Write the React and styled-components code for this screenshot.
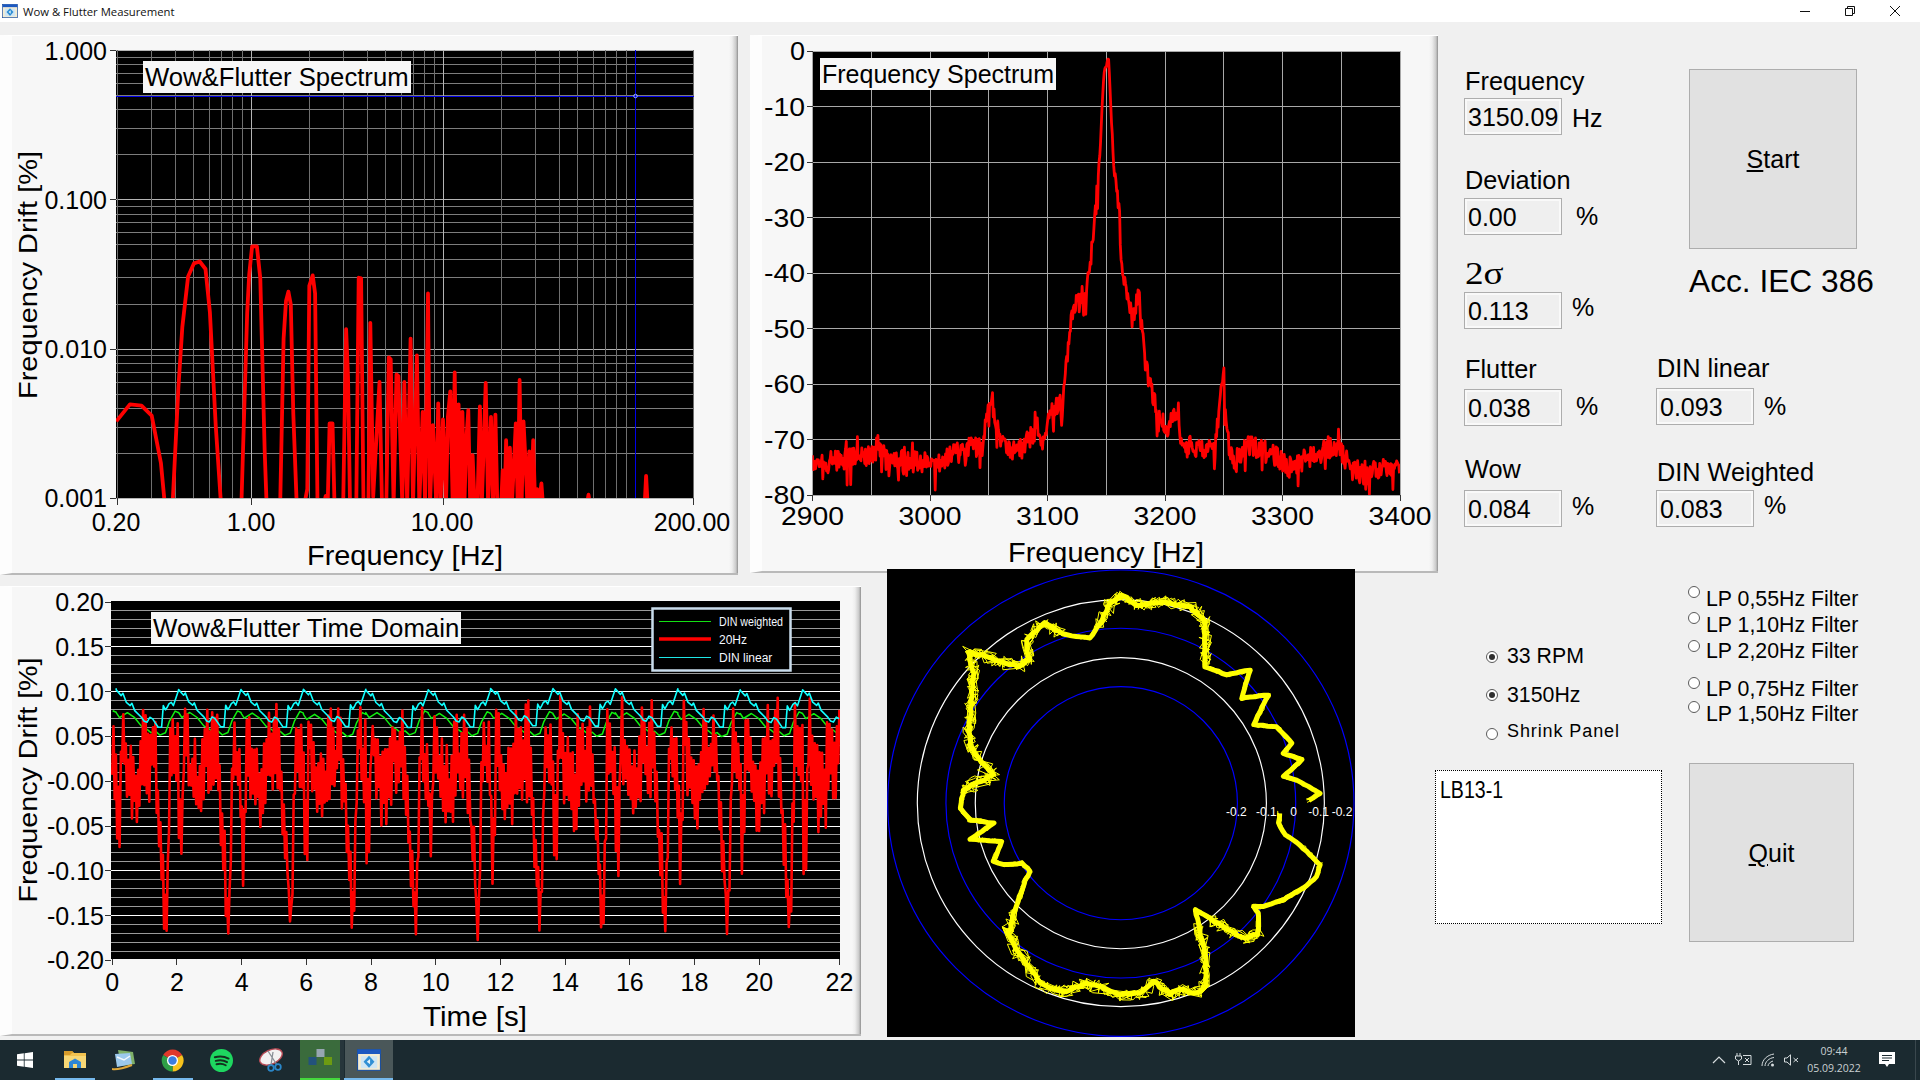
import React from "react";
import styled, { createGlobalStyle } from "styled-components";

const GlobalStyle = createGlobalStyle`
  html, body {
    margin: 0;
    padding: 0;
    background: #f0f0f0;
    overflow: hidden;
  }
  * { box-sizing: border-box; }
`;

/* ---------- helpers for the fake measurement data ---------- */

const seeded = (seed) => {
  let s = seed;
  return () => {
    s = (s * 16807) % 2147483647;
    return (s - 1) / 2147483646;
  };
};

const lookup = (table, t) => {
  for (let i = 1; i < table.length; i++) {
    if (t <= table[i][0]) {
      const [x0, ...a] = table[i - 1];
      const [x1, ...b] = table[i];
      const f = (t - x0) / (x1 - x0 || 1);
      return a.map((v, k) => v + (b[k] - v) * f);
    }
  }
  return table[table.length - 1].slice(1);
};

const toPoints = (pts) => pts.map(([x, y]) => `${x.toFixed(1)},${y.toFixed(1)}`).join(" ");

/* ---------- wow & flutter spectrum ---------- */

const specX = (f) => 251.6 + Math.log10(f) * 192;
const specY = (v) => 15.5 + -Math.log10(v) * 149.3;
const specMap = ([x, y]) => [x / 2.063, y / 2.658 - 35];

const specRaw = [
  [240, 1120], [268, 1075], [292, 1078], [313, 1105], [332, 1230], [340, 1340],
  [356, 1340], [368, 1030], [376, 870], [388, 735], [400, 700], [412, 695], [424, 715], [433, 830], [445, 1130], [456, 1340],
  [498, 1340], [510, 830], [514, 730], [520, 655], [530, 655], [537, 740], [546, 1200], [550, 1340],
  [578, 1340], [585, 900], [590, 800], [595, 775], [600, 810], [605, 1100], [612, 1340],
  [628, 1340], [634, 1300], [638, 760], [645, 732], [650, 780], [655, 1340],
  [668, 1340], [672, 1318], [676, 1340], [680, 1125], [686, 1125], [690, 1340],
  [708, 1340], [714, 875], [718, 1000], [722, 1340],
  [735, 1340], [740, 738], [745, 740], [750, 1340],
  [760, 1340], [764, 858], [770, 1320], [783, 1015], [788, 1340],
  [797, 1340], [802, 950], [806, 955], [812, 1340], [818, 995], [822, 1000], [830, 1340], [834, 1015], [840, 1340],
  [847, 900], [852, 1340], [860, 945], [865, 1340], [872, 1095], [877, 1340], [883, 780], [887, 1340], [893, 1130],
  [900, 1340], [904, 1072], [909, 1340], [914, 1115], [920, 1340], [924, 1108], [929, 1040], [934, 1340], [938, 990], [942, 1340],
  [946, 1075], [950, 1340], [954, 1095], [958, 1340], [962, 1170], [966, 1090], [970, 1340], [975, 1210], [979, 1340],
  [985, 1340], [990, 1080], [994, 1340], [998, 1180], [1002, 1018], [1007, 1340], [1013, 1108], [1017, 1340], [1022, 1102], [1026, 1340],
  [1034, 1340], [1037, 1250], [1041, 1340], [1044, 1170], [1048, 1340], [1052, 1190], [1056, 1340], [1060, 1240], [1064, 1125], [1068, 1340],
  [1072, 1010], [1076, 1340], [1080, 1120], [1084, 1220], [1088, 1340], [1092, 1200], [1096, 1340], [1100, 1170], [1104, 1340], [1108, 1300],
  [1112, 1340], [1117, 1285], [1120, 1340],
  [1211, 1340], [1214, 1315], [1217, 1340],
  [1330, 1340], [1333, 1265], [1336, 1340],
];

const specCurve = toPoints(specRaw.map(specMap));

/* ---------- carrier spectrum ---------- */

const fftMap = ([x, y]) => [x / 2.178 - 10, y / 2.75 - 15];

const fftEnvelope = [
  [158, 1225], [290, 1195], [300, 1170], [320, 1210], [400, 1215], [415, 1225], [500, 1175], [530, 1180],
  [540, 1050], [548, 1025], [555, 1100], [570, 1170], [600, 1190], [630, 1150], [650, 1120], [660, 1160],
  [680, 1075], [700, 1050], [710, 960], [720, 820], [735, 770], [755, 745], [765, 640], [775, 520], [785, 340],
  [792, 150], [798, 130], [803, 100], [808, 250], [815, 420], [825, 520], [832, 700], [845, 750], [855, 830],
  [870, 735], [878, 870], [890, 990], [905, 1060], [915, 1090], [930, 1140], [950, 1075], [965, 1170],
  [1000, 1180], [1035, 1180], [1045, 1045], [1053, 995], [1060, 1150], [1080, 1220], [1105, 1165], [1150, 1190],
  [1200, 1230], [1240, 1200], [1295, 1175], [1330, 1220], [1360, 1255], [1390, 1230], [1437, 1230],
];

const fftCurve = (() => {
  const rnd = seeded(4711);
  const pts = [];
  for (let x = 158; x <= 1437; x += 1.6) {
    const [env] = lookup(fftEnvelope, x);
    const peak = x > 780 && x < 815;
    const amp = peak ? 8 : x > 700 && x < 900 ? 26 : 30;
    let y = env + (rnd() - 0.5) * amp * 2;
    if (!peak && rnd() < 0.06) y += 45;
    if (!peak && rnd() < 0.04) y -= 34;
    pts.push([x, y]);
  }
  return toPoints(pts.map(fftMap));
})();

/* ---------- time domain ---------- */

const timeMap = ([x, y]) => [x / 1.782, y / 3 - 16];
const PERIOD = 111.2;

// upper and lower edge of the red band over one platter turn
const redBand = [
  [0, 500, 660], [6, 410, 720], [9, 600, 950], [14, 620, 950], [17, 365, 600], [21, 365, 640], [25, 500, 700],
  [35, 500, 790], [45, 540, 800], [52, 390, 760], [57, 390, 660], [62, 480, 700], [69, 370, 700], [74, 370, 700],
  [80, 540, 770], [85, 740, 900], [90, 760, 1000], [93, 960, 1112], [97, 960, 1112], [100, 700, 960],
  [104, 385, 640], [108, 385, 620], [111.2, 500, 660],
];

const cyanWave = [
  [0, 358], [9, 375], [12, 368], [18, 395], [25, 405], [28, 398], [33, 420], [45, 440], [50, 452], [55, 455], [60, 440],
  [65, 445], [75, 470], [81, 470], [84, 405], [88, 418], [91, 410], [94, 400], [98, 395], [102, 405], [111.2, 358],
];

const greenWave = [
  [0, 430], [6, 445], [20, 430], [33, 445], [45, 470], [55, 480], [62, 490], [70, 485], [78, 497], [88, 490], [92, 470],
  [95, 455], [105, 425], [111.2, 430],
];

const timeRed = (() => {
  const rnd = seeded(90210);
  const pts = [];
  let i = 0;
  for (let x = 200; x <= 1496; x += 2.2) {
    const [up, lo] = lookup(redBand, (x - 200) % PERIOD);
    const f = rnd() * 0.4;
    pts.push([x, i % 2 ? up + (lo - up) * f : lo - (lo - up) * f]);
    i += 1;
  }
  return toPoints(pts.map(timeMap));
})();

const periodic = (wave, seed) => {
  const rnd = seeded(seed);
  const pts = [];
  for (let k = -1; k < 12; k++) {
    const wobble = (rnd() - 0.5) * 6;
    wave.forEach(([t, y]) => {
      const x = 207 + k * PERIOD + t;
      if (x >= 200 && x <= 1496) pts.push([x, y + wobble]);
    });
  }
  return toPoints(pts.map(timeMap));
};

const timeCyan = periodic(cyanWave, 333);
const timeGreen = periodic(greenWave, 777);

/* ---------- polar plot, traced in 3x coordinates ---------- */

const polarRaw = [
  [1200, 760], [1195, 790], [1215, 825], [1240, 840], [1280, 875], [1320, 915], [1310, 950], [1270, 985], [1210, 1020],
  [1150, 1040], [1120, 1040], [1135, 1060], [1135, 1125], [1090, 1135], [1040, 1110], [990, 1075], [945, 1050], [960, 1110],
  [975, 1190], [975, 1280], [950, 1300], [900, 1290], [870, 1305], [820, 1265], [780, 1300], [720, 1305], [680, 1290],
  [620, 1270], [560, 1295], [520, 1290], [480, 1270], [440, 1210], [400, 1160], [385, 1120], [405, 1050], [435, 960],
  [450, 935], [425, 910], [370, 915], [340, 905], [365, 845], [270, 838], [340, 790], [270, 780], [240, 745], [250, 690],
  [290, 670], [340, 645], [300, 605], [270, 560], [265, 500], [275, 420], [280, 340], [265, 275], [330, 295], [415, 320],
  [445, 300], [440, 240], [490, 190], [560, 225], [630, 235], [660, 190], [690, 130], [725, 105], [770, 135], [850, 125],
  [930, 140], [975, 185], [975, 320], [1040, 345], [1110, 330], [1085, 415], [1165, 405], [1120, 495], [1190, 500],
  [1235, 550], [1210, 580], [1265, 600], [1210, 650], [1250, 660], [1320, 700], [1275, 730],
];

const polarPass = (seed, amount) => {
  const rnd = seeded(seed);
  const pts = [];
  polarRaw.forEach((p, i) => {
    const next = polarRaw[i + 1];
    if (!next) return;
    const n = Math.max(1, Math.round(Math.hypot(next[0] - p[0], next[1] - p[1]) / 14));
    for (let k = 0; k < n; k++) {
      const f = k / n;
      const noisy = p[1] > 1100 || (p[0] < 500 && p[1] < 700) || p[1] < 200;
      const a = noisy ? amount * 1.6 : amount * 0.6;
      pts.push([
        p[0] + (next[0] - p[0]) * f + (rnd() - 0.5) * a,
        p[1] + (next[1] - p[1]) * f + (rnd() - 0.5) * a,
      ]);
    }
  });
  return toPoints(pts);
};

const polarPasses = [11, 23, 37, 41, 59, 67].map((seed) => polarPass(seed, 24));
const polarCore = polarPass(5, 4);

/* ---------- page chrome ---------- */

const Page = styled.div`
  width: 1920px;
  height: 1080px;
  display: flex;
  flex-direction: column;
  background: #f0f0f0;
  font-family: "Liberation Sans", Arial, sans-serif;
  color: #000;
  overflow: hidden;
`;

const TitleBar = styled.div`
  height: 22px;
  flex: none;
  background: #fff;
  display: flex;
  align-items: center;
  padding: 0 3px 0 2px;
`;

const TitleText = styled.span`
  font-family: "Open Sans", sans-serif;
  font-size: 11.3px;
  margin-left: 5px;
  color: #111;
  white-space: nowrap;
`;

const WindowButtons = styled.div`
  margin-left: auto;
  display: flex;
`;

const WindowButton = styled.div`
  width: 45px;
  height: 22px;
  display: flex;
  align-items: center;
  justify-content: center;
`;

const TopRow = styled.div`
  height: 564px;
  flex: none;
  padding-top: 13px;
  display: flex;
  align-items: flex-start;
`;

const BottomRow = styled.div`
  height: 454px;
  flex: none;
  display: flex;
  align-items: flex-start;
`;

const Panel = styled.div`
  position: relative;
  flex: none;
  width: ${(p) => p.$w}px;
  height: ${(p) => p.$h}px;
  margin-left: ${(p) => p.$left || 0}px;
  background: linear-gradient(to left, #8f8f8f 0, #c9c9c9 2px, #eeeeee 6px, #f7f7f7 9px);
  border-top: 1px solid #fff;
  border-bottom: 2px solid #b9b9b9;
  border-left: 12px solid #fdfdfd;
`;

const ChartSvg = styled.svg`
  position: absolute;
  left: -12px;
  top: -1px;
  display: block;
`;

const PlotTitle = styled.div`
  position: absolute;
  left: ${(p) => p.$x - 12}px;
  top: ${(p) => p.$y - 1}px;
  height: 32px;
  line-height: 33px;
  padding: 0 2px;
  background: #f7f7f7;
  font-size: ${(p) => p.$size || 25}px;
  white-space: nowrap;
`;

const AxisText = styled.text`
  font-family: "Liberation Sans", Arial, sans-serif;
  font-size: ${(p) => p.$size || 25}px;
  fill: #000;
`;

const LegendLabel = styled.text`
  font-family: "Liberation Sans", Arial, sans-serif;
  font-size: 12px;
  fill: #f4f8ff;
`;

const PolarBox = styled.div`
  position: relative;
  flex: none;
  width: 468px;
  height: 468px;
  margin: -17px 0 0 26px;
  background: #000;
`;

const PolarSvg = styled.svg`
  display: block;
`;

const PolarLabel = styled.text`
  font-family: "Liberation Sans", Arial, sans-serif;
  font-size: 36px;
  fill: #fff;
`;

/* ---------- readouts on the right ---------- */

const Readouts = styled.div`
  flex: 1;
  display: flex;
  padding-left: 26px;
`;

const ReadoutColumn = styled.div`
  width: ${(p) => p.$w}px;
  flex: none;
  display: flex;
  flex-direction: column;
`;

const Readout = styled.div`
  height: ${(p) => p.$h}px;
  flex: none;
  display: flex;
  flex-direction: column;
  justify-content: flex-end;
`;

const ReadoutLabel = styled.div`
  font-size: 25.3px;
  line-height: 24px;
  height: 24px;
  margin: 0 0 ${(p) => p.$gap + 1}px 1px;
  white-space: nowrap;
`;

const SigmaLabel = styled(ReadoutLabel)`
  font-family: "Liberation Serif", serif;
  font-size: 31px;
  transform: scaleX(1.2);
  transform-origin: left center;
`;

const ValueRow = styled.div`
  display: flex;
  align-items: center;
`;

const ValueBox = styled.div`
  width: 98px;
  height: 37px;
  border: 1px solid #adadad;
  box-shadow: inset 0 0 0 2px #f9f9f9;
  background: #efefef;
  font-size: 25px;
  line-height: 37px;
  padding-left: 3px;
`;

const Unit = styled.span`
  font-size: 25px;
  margin-left: ${(p) => p.$gap}px;
  transform: translateY(${(p) => p.$dy || 0}px);
`;

const BigButton = styled.div`
  width: ${(p) => p.$w}px;
  height: ${(p) => p.$h}px;
  margin-top: ${(p) => p.$top}px;
  margin-left: ${(p) => p.$left}px;
  padding-top: ${(p) => p.$pad || 0}px;
  flex: none;
  background: #e1e1e1;
  border: 1px solid #adadad;
  display: flex;
  align-items: center;
  justify-content: center;
  font-size: 25px;
`;

const StandardNote = styled.div`
  margin: 14px 0 0 33px;
  font-size: 31.7px;
  line-height: 36px;
  white-space: nowrap;
`;

/* ---------- radios, memo and quit ---------- */

const Controls = styled.div`
  flex: 1;
  display: flex;
  padding-left: 80px;
`;

const ControlLeft = styled.div`
  width: 253px;
  flex: none;
  padding-top: 58px;
  display: flex;
  flex-direction: column;
`;

const ControlRight = styled.div`
  flex: none;
  display: flex;
  flex-direction: column;
`;

const RadioRow = styled.div`
  height: 24px;
  flex: none;
  display: flex;
  align-items: flex-start;
  margin-top: ${(p) => p.$top || 0}px;
  margin-left: ${(p) => p.$left || 0}px;
`;

const RadioDot = styled.span`
  width: 12px;
  height: 12px;
  flex: none;
  margin-top: ${(p) => p.$dy}px;
  border-radius: 50%;
  border: 1px solid #5a5a5a;
  background: #fff;
  display: flex;
  align-items: center;
  justify-content: center;

  &::after {
    content: "";
    display: ${(p) => (p.$on ? "block" : "none")};
    width: 6px;
    height: 6px;
    border-radius: 50%;
    background: #2f2f2f;
  }
`;

const RadioText = styled.span`
  font-size: ${(p) => p.$size || 21.3}px;
  line-height: 24px;
  margin-left: ${(p) => p.$gap || 6}px;
  letter-spacing: ${(p) => p.$track || 0}px;
  white-space: nowrap;
`;

const Memo = styled.div`
  width: 227px;
  height: 154px;
  flex: none;
  margin-top: 27px;
  background: #fff;
  border: 1px dotted #000;
  padding: 4px 4px;
`;

const MemoText = styled.span`
  display: inline-block;
  font-size: 23px;
  line-height: 30px;
  transform: scaleX(0.85);
  transform-origin: left center;
`;

/* ---------- taskbar ---------- */

const Taskbar = styled.div`
  flex: none;
  height: 40px;
  background: #1b2a30;
  display: flex;
  margin-top: auto;
`;

const TaskItem = styled.div`
  position: relative;
  width: ${(p) => p.$w || 49}px;
  height: 40px;
  flex: none;
  display: flex;
  align-items: center;
  justify-content: center;
`;

const TaskUnderline = styled.span`
  position: absolute;
  bottom: 0;
  left: ${(p) => p.$inset ?? 5}px;
  right: ${(p) => (p.$inset !== undefined ? p.$inset : 4)}px;
  height: 2px;
  background: ${(p) => p.$color || "#76b9ed"};
`;

const TaskTile = styled.span`
  position: absolute;
  top: 0;
  bottom: 0;
  left: ${(p) => p.$left}px;
  right: ${(p) => p.$right}px;
  background: ${(p) => p.$color};
`;

const TaskIcon = styled.svg`
  position: relative;
  display: block;
`;

const Tray = styled.div`
  margin-left: auto;
  display: flex;
  align-items: center;
  height: 40px;
`;

const TrayIcon = styled.div`
  width: ${(p) => p.$w}px;
  flex: none;
  display: flex;
  justify-content: center;
`;

const Clock = styled.div`
  width: 66px;
  flex: none;
  text-align: center;
  font-family: "Open Sans", sans-serif;
  font-size: 10.5px;
  line-height: 17px;
  color: #c9d0d2;
`;

const DesktopEdge = styled.div`
  width: 1px;
  height: 40px;
  margin: 0 4px 0 8px;
  background: #3a474d;
`;

/* ---------- charts ---------- */

const SpectrumChart = () => {
  const decades = [0.2, 0.3, 0.4, 0.5, 0.6, 0.7, 0.8, 0.9, 1, 2, 3, 4, 5, 6, 7, 8, 9, 10, 20, 30, 40, 50, 60, 70, 80, 90, 100, 200];
  const levels = [];
  [0.001, 0.01, 0.1].forEach((d) => {
    for (let m = 1; m < 10; m++) levels.push(d * m);
  });
  levels.push(1);
  const major = (v) => [1, 10, 100].some((m) => Math.abs(v - m) < 1e-6);
  return (
    <ChartSvg width="738" height="540" viewBox="0 0 738 540">
      <defs>
        <clipPath id="specClip"><rect x="116" y="15" width="578" height="448" /></clipPath>
      </defs>
      <rect x="116" y="15" width="578" height="448" fill="#000" />
      <g shapeRendering="crispEdges">
        {levels.map((v) => (
          <line key={v} x1="116" x2="694" y1={specY(v)} y2={specY(v)} stroke={[0.001, 0.01, 0.1, 1].some((m) => Math.abs(v - m) < 1e-9) ? "#b4b4b4" : "#7d7d7d"} />
        ))}
        {decades.map((f) => (
          <line key={f} x1={specX(f)} x2={specX(f)} y1="15" y2="463" stroke={major(f) ? "#b4b4b4" : "#6f6f6f"} />
        ))}
        <line x1="116" x2="694" y1="61" y2="61" stroke="#0000e6" />
        <line x1="635" x2="635" y1="15" y2="463" stroke="#0000e6" />
        {[0.001, 0.01, 0.1, 1].map((v) => (
          <line key={v} x1="110" x2="116" y1={specY(v)} y2={specY(v)} stroke="#333" />
        ))}
        {[0.2, 1, 10, 200].map((f) => (
          <line key={f} x1={specX(f)} x2={specX(f)} y1="463" y2="470" stroke="#333" />
        ))}
      </g>
      <circle cx="635.5" cy="61" r="1.8" fill="none" stroke="#8fa6ff" />
      <polyline points={specCurve} fill="none" stroke="#f00" strokeWidth="3.8" strokeLinejoin="round" clipPath="url(#specClip)" />
      {[["1.000", 1], ["0.100", 0.1], ["0.010", 0.01], ["0.001", 0.001]].map(([t, v]) => (
        <AxisText key={t} x="107" y={specY(v) + 9} textAnchor="end">{t}</AxisText>
      ))}
      <AxisText x="116" y="496" textAnchor="middle">0.20</AxisText>
      <AxisText x="251" y="496" textAnchor="middle">1.00</AxisText>
      <AxisText x="442" y="496" textAnchor="middle">10.00</AxisText>
      <AxisText x="692" y="496" textAnchor="middle">200.00</AxisText>
      <AxisText x="405" y="530" $size={28} textAnchor="middle" textLength="196" lengthAdjust="spacingAndGlyphs">Frequency [Hz]</AxisText>
      <AxisText transform="translate(37 240) rotate(-90)" textAnchor="middle" textLength="248" lengthAdjust="spacingAndGlyphs">Frequency Drift [%]</AxisText>
    </ChartSvg>
  );
};

const FftChart = () => {
  const left = 62.5;
  const right = 650;
  const top = 16;
  const bottom = 460;
  const hz = Array.from({ length: 11 }, (_, i) => left + (i * (right - left)) / 10);
  const db = Array.from({ length: 9 }, (_, i) => top + i * 55.5);
  return (
    <ChartSvg width="688" height="538" viewBox="0 0 688 538">
      <defs>
        <clipPath id="fftClip"><rect x={left} y={top} width={right - left} height={bottom - top} /></clipPath>
      </defs>
      <rect x={left} y={top} width={right - left} height={bottom - top} fill="#000" />
      <g shapeRendering="crispEdges">
        {db.map((y) => (
          <line key={y} x1={left} x2={right} y1={y} y2={y} stroke="#a8a8a8" />
        ))}
        {hz.map((x) => (
          <line key={x} x1={x} x2={x} y1={top} y2={bottom} stroke="#a8a8a8" />
        ))}
        {db.map((y) => (
          <line key={y} x1={left - 6} x2={left} y1={y} y2={y} stroke="#333" />
        ))}
        {hz.filter((_, i) => i % 2 === 0).map((x) => (
          <line key={x} x1={x} x2={x} y1={bottom} y2={bottom + 6} stroke="#333" />
        ))}
      </g>
      <polyline points={fftCurve} fill="none" stroke="#f00" strokeWidth="2.8" strokeLinejoin="round" clipPath="url(#fftClip)" />
      {db.map((y, i) => (
        <AxisText key={y} x="55" y={y + 9} textAnchor="end" textLength={i === 0 ? 15 : 41} lengthAdjust="spacingAndGlyphs">
          {i === 0 ? "0" : `-${i * 10}`}
        </AxisText>
      ))}
      {hz.filter((_, i) => i % 2 === 0).map((x, i) => (
        <AxisText key={x} x={x} y="490" textAnchor="middle" textLength="63" lengthAdjust="spacingAndGlyphs">{2900 + i * 100}</AxisText>
      ))}
      <AxisText x="356" y="527" $size={28} textAnchor="middle" textLength="196" lengthAdjust="spacingAndGlyphs">Frequency [Hz]</AxisText>
    </ChartSvg>
  );
};

const TimeChart = () => {
  const left = 111;
  const right = 840;
  const top = 15;
  const bottom = 373;
  const step = 44.8;
  const zero = 195.2;
  const majors = [-4, -3, -2, -1, 0, 1, 2, 3, 4].map((i) => zero + i * step);
  const minors = [];
  for (let i = -4; i < 4; i++) {
    for (let k = 1; k < 5; k++) minors.push(zero + (i + k / 5) * step);
  }
  const labels = ["0.20", "0.15", "0.10", "0.05", "-0.00", "-0.05", "-0.10", "-0.15", "-0.20"];
  const seconds = Array.from({ length: 12 }, (_, i) => i * 2);
  // the axis runs a little past 22 s, the last tick label is pushed to the end
  const timeX = (s) => (s === 22 ? 839.5 : 112.2 + s * 32.35);
  return (
    <ChartSvg width="861" height="450" viewBox="0 0 861 450">
      <defs>
        <clipPath id="timeClip"><rect x={left} y={top} width={right - left} height={bottom - top} /></clipPath>
      </defs>
      <rect x={left} y={top} width={right - left} height={bottom - top} fill="#000" />
      <g shapeRendering="crispEdges">
        {minors.map((y) => (
          <line key={y} x1={left} x2={right} y1={y} y2={y} stroke="#9a9a9a" />
        ))}
        {majors.slice(1, -1).map((y) => (
          <line key={y} x1={left} x2={right} y1={y} y2={y} stroke="#fff" />
        ))}
        {majors.map((y) => (
          <line key={y} x1={left - 6} x2={left} y1={y} y2={y} stroke="#333" />
        ))}
        {seconds.map((s) => (
          <line key={s} x1={timeX(s)} x2={timeX(s)} y1={bottom} y2={bottom + 6} stroke="#333" />
        ))}
      </g>
      <g clipPath="url(#timeClip)" fill="none" strokeLinejoin="round">
        <polyline points={timeGreen} stroke="#10f010" strokeWidth="1.5" />
        <polyline points={timeRed} stroke="#f00" strokeWidth="2.6" />
        <polyline points={timeCyan} stroke="#10ffff" strokeWidth="1.6" />
      </g>
      <rect x="652.5" y="22.5" width="138" height="62" fill="#000" stroke="#c9dcec" strokeWidth="2.5" />
      <line x1="659" x2="711" y1="35.5" y2="35.5" stroke="#13e013" />
      <line x1="659" x2="711" y1="53" y2="53" stroke="#f00" strokeWidth="3.5" />
      <line x1="659" x2="711" y1="71.5" y2="71.5" stroke="#1fe8e8" />
      <LegendLabel x="719" y="40" textLength="64" lengthAdjust="spacingAndGlyphs">DIN weighted</LegendLabel>
      <LegendLabel x="719" y="58">20Hz</LegendLabel>
      <LegendLabel x="719" y="76">DIN linear</LegendLabel>
      {labels.map((t, i) => (
        <AxisText key={t} x="104" y={majors[i] + 9} textAnchor="end">{t}</AxisText>
      ))}
      {seconds.map((s) => (
        <AxisText key={s} x={timeX(s)} y="405" textAnchor="middle">{s}</AxisText>
      ))}
      <AxisText x="475" y="440" $size={28} textAnchor="middle" textLength="104" lengthAdjust="spacingAndGlyphs">Time [s]</AxisText>
      <AxisText transform="translate(37 194) rotate(-90)" textAnchor="middle" textLength="245" lengthAdjust="spacingAndGlyphs">Frequency Drift [%]</AxisText>
    </ChartSvg>
  );
};

const PolarChart = () => (
  <PolarSvg width="468" height="468" viewBox="20 27 1405 1405">
    {[
      [700, "#0000ff"],
      [611, "#fff"],
      [525, "#0000ff"],
      [437, "#fff"],
      [350, "#0000ff"],
    ].map(([r, c]) => (
      <circle key={r} cx="722" cy="730" r={r} fill="none" stroke={c} strokeWidth="3.5" />
    ))}
    {polarPasses.map((p, i) => (
      <polyline key={i} points={p} fill="none" stroke="#ff0" strokeWidth="3" />
    ))}
    <polyline points={polarCore} fill="none" stroke="#ff0" strokeWidth="15" strokeLinejoin="round" />
    <PolarLabel x="1038" y="770">-0.2</PolarLabel>
    <PolarLabel x="1128" y="770">-0.1</PolarLabel>
    <PolarLabel x="1231" y="770">0</PolarLabel>
    <PolarLabel x="1285" y="770">-0.1</PolarLabel>
    <PolarLabel x="1355" y="770">-0.2</PolarLabel>
  </PolarSvg>
);

/* ---------- icons ---------- */

const AppIcon = ({ w = 16, h = 14 }) => (
  <TaskIcon width={w} height={h} viewBox="0 0 22 20">
    <rect x="0.5" y="0.5" width="21" height="19" fill="#f4ecd2" stroke="#1c4f9c" />
    <rect x="0.5" y="0.5" width="21" height="4" fill="#1c58c0" />
    <rect x="3.5" y="6.5" width="15" height="11" fill="#cfe6f4" />
    <path d="M11 6 L16 11.5 L11 17 L6 11.5 Z" fill="#2f8fd4" />
    <path d="M9 11.5 L12 9 L12 14 Z" fill="#e4f3fb" />
  </TaskIcon>
);

const WinLogo = () => (
  <TaskIcon width="16" height="16" viewBox="0 0 16 16">
    <path d="M0 2.2 L6.8 1.3 V7.5 H0 Z M7.6 1.2 L16 0 V7.5 H7.6 Z M0 8.4 H6.8 V14.7 L0 13.8 Z M7.6 8.4 H16 V16 L7.6 14.8 Z" fill="#fff" />
  </TaskIcon>
);

const FolderIcon = () => (
  <TaskIcon width="22" height="20" viewBox="0 0 22 20">
    <path d="M0 1 H8 L10 3 H22 V18 H0 Z" fill="#f3c24f" />
    <path d="M0 1 H8 L10 3 H8 L6 5 H0 Z" fill="#d79b2a" />
    <path d="M0 6 H22 V18 H0 Z" fill="#f8d775" />
    <path d="M5 18 V12 L11 8.5 L17 12 V18 H13 V14 H9 V18 Z" fill="#2f86d6" />
  </TaskIcon>
);

const MailIcon = () => (
  <TaskIcon width="24" height="22" viewBox="0 0 24 22">
    <path d="M6 1 L21 3 L23 15 L9 17 Z" fill="#7fb069" />
    <path d="M3 5 L18 4 L20 15 L5 18 Z" fill="#9cc9ec" />
    <path d="M5 8 L12 11 L18 7" fill="none" stroke="#f4f8fc" strokeWidth="1.5" />
    <path d="M0 20 C5 21 12 19 20 16" fill="none" stroke="#e0a83a" strokeWidth="2" />
  </TaskIcon>
);

const ChromeIcon = () => (
  <TaskIcon width="23" height="23" viewBox="0 0 48 48">
    <path d="M24 24 L4.5 12.5 A23 23 0 0 1 44 12.5 Z" fill="#e0392b" />
    <path d="M24 24 L44 12.5 A23 23 0 0 1 24 47 Z" fill="#f6c21c" />
    <path d="M24 24 L24 47 A23 23 0 0 1 4.5 12.5 Z" fill="#2e9e46" />
    <circle cx="24" cy="24" r="11.5" fill="#fff" />
    <circle cx="24" cy="24" r="8.8" fill="#3b7de0" />
  </TaskIcon>
);

const SpotifyIcon = () => (
  <TaskIcon width="23" height="23" viewBox="0 0 24 24">
    <circle cx="12" cy="12" r="12" fill="#1ed760" />
    <path d="M5 8.6 C10 7.2 15 7.6 19.4 10 M6 12.4 C10 11.3 14.4 11.7 17.8 13.7 M6.8 15.9 C10 15.1 13.6 15.4 16.4 17" fill="none" stroke="#14301e" strokeWidth="2" strokeLinecap="round" />
  </TaskIcon>
);

const SnipIcon = () => (
  <TaskIcon width="26" height="24" viewBox="0 0 26 24">
    <ellipse cx="13" cy="9" rx="12" ry="7" transform="rotate(-25 13 9)" fill="#f3f1f1" stroke="#b84a55" strokeWidth="1.4" />
    <path d="M10 3 L19 17 M15 4 L13 17" stroke="#8a8f96" strokeWidth="1.3" />
    <circle cx="20" cy="19" r="2.8" fill="none" stroke="#2a86c8" strokeWidth="1.8" />
    <circle cx="13" cy="20" r="2.8" fill="none" stroke="#2a86c8" strokeWidth="1.8" />
  </TaskIcon>
);

const TilesIcon = () => (
  <TaskIcon width="24" height="24" viewBox="0 0 24 24">
    <rect x="8.5" y="1" width="8" height="8" fill="#97a6b2" />
    <rect x="0.5" y="9" width="8" height="8" fill="#23527c" />
    <rect x="16" y="9" width="8" height="8" fill="#6d9b12" />
  </TaskIcon>
);

const NoticeIcon = () => (
  <TaskIcon width="16" height="16" viewBox="0 0 16 16">
    <path d="M0 0 H16 V12 H10 L8 15 L6 12 H0 Z" fill="#fff" />
    <path d="M3 3.5 H13 M3 6 H13 M3 8.5 H10" stroke="#1b2a30" strokeWidth="1" />
  </TaskIcon>
);

/* ---------- page ---------- */

const lpFilters = [
  ["LP 0,55Hz Filter", 1, -1],
  ["LP 1,10Hz Filter", 2, -1],
  ["LP 2,20Hz Filter", 2, 1],
  ["LP 0,75Hz Filter", 14, 0],
  ["LP 1,50Hz Filter", 1, -1],
];

const App = () => (
  <Page>
    <GlobalStyle />
    <TitleBar>
      <AppIcon />
      <TitleText>Wow &amp; Flutter Measurement</TitleText>
      <WindowButtons>
        <WindowButton>
          <svg width="10" height="10" viewBox="0 0 10 10"><path d="M0 5.5 H10" stroke="#111" /></svg>
        </WindowButton>
        <WindowButton>
          <svg width="10" height="10" viewBox="0 0 10 10"><path d="M0.5 2.5 H7.5 V9.5 H0.5 Z M2.5 2.5 V0.5 H9.5 V7.5 H7.5" fill="none" stroke="#111" /></svg>
        </WindowButton>
        <WindowButton>
          <svg width="10" height="10" viewBox="0 0 10 10"><path d="M0 0 L10 10 M10 0 L0 10" stroke="#111" /></svg>
        </WindowButton>
      </WindowButtons>
    </TitleBar>

    <TopRow>
      <Panel $w={738} $h={540}>
        <SpectrumChart />
        <PlotTitle $x={143} $y={26} $size={25.7}>Wow&amp;Flutter Spectrum</PlotTitle>
      </Panel>
      <Panel $w={688} $h={538} $left={12}>
        <FftChart />
        <PlotTitle $x={70} $y={23}>Frequency Spectrum</PlotTitle>
      </Panel>
      <Readouts>
        <ReadoutColumn $w={192}>
          <Readout $h={100}>
            <ReadoutLabel $gap={4}>Frequency</ReadoutLabel>
            <ValueRow>
              <ValueBox>3150.09</ValueBox>
              <Unit $gap={10} $dy={2}>Hz</Unit>
            </ValueRow>
          </Readout>
          <Readout $h={100}>
            <ReadoutLabel $gap={5}>Deviation</ReadoutLabel>
            <ValueRow>
              <ValueBox>0.00</ValueBox>
              <Unit $gap={14}>%</Unit>
            </ValueRow>
          </Readout>
          <Readout $h={94}>
            <SigmaLabel $gap={5}>2σ</SigmaLabel>
            <ValueRow>
              <ValueBox>0.113</ValueBox>
              <Unit $gap={10} $dy={-3}>%</Unit>
            </ValueRow>
          </Readout>
          <Readout $h={97}>
            <ReadoutLabel $gap={7}>Flutter</ReadoutLabel>
            <ValueRow>
              <ValueBox>0.038</ValueBox>
              <Unit $gap={14} $dy={-1}>%</Unit>
            </ValueRow>
          </Readout>
          <Readout $h={101}>
            <ReadoutLabel $gap={8}>Wow</ReadoutLabel>
            <ValueRow>
              <ValueBox>0.084</ValueBox>
              <Unit $gap={10} $dy={-2}>%</Unit>
            </ValueRow>
          </Readout>
        </ReadoutColumn>
        <ReadoutColumn $w={230}>
          <BigButton $w={168} $h={180} $left={33} $top={34}>
            <span><u>S</u>tart</span>
          </BigButton>
          <StandardNote>Acc. IEC 386</StandardNote>
          <Readout $h={126}>
            <ReadoutLabel $gap={7}>DIN linear</ReadoutLabel>
            <ValueRow>
              <ValueBox>0.093</ValueBox>
              <Unit $gap={10}>%</Unit>
            </ValueRow>
          </Readout>
          <Readout $h={102}>
            <ReadoutLabel $gap={5}>DIN Weighted</ReadoutLabel>
            <ValueRow>
              <ValueBox>0.083</ValueBox>
              <Unit $gap={10} $dy={-3}>%</Unit>
            </ValueRow>
          </Readout>
        </ReadoutColumn>
      </Readouts>
    </TopRow>

    <BottomRow>
      <Panel $w={861} $h={450}>
        <TimeChart />
        <PlotTitle $x={151} $y={26} $size={25.8}>Wow&amp;Flutter Time Domain</PlotTitle>
      </Panel>
      <PolarBox>
        <PolarChart />
      </PolarBox>
      <Controls>
        <ControlLeft>
          <RadioRow $left={51}>
            <RadioDot $on $dy={7} />
            <RadioText $gap={9}>33 RPM</RadioText>
          </RadioRow>
          <RadioRow $left={51} $top={15}>
            <RadioDot $on $dy={6} />
            <RadioText $gap={9}>3150Hz</RadioText>
          </RadioRow>
          <RadioRow $left={51} $top={12}>
            <RadioDot $dy={9} />
            <RadioText $gap={9} $size={18} $track={0.9}>Shrink Panel</RadioText>
          </RadioRow>
          <Memo>
            <MemoText>LB13-1</MemoText>
          </Memo>
        </ControlLeft>
        <ControlRight>
          {lpFilters.map(([label, top, dy]) => (
            <RadioRow key={label} $top={top}>
              <RadioDot $dy={dy} />
              <RadioText>{label}</RadioText>
            </RadioRow>
          ))}
          <BigButton $w={165} $h={179} $left={1} $top={37} $pad={2}>
            <span><u>Q</u>uit</span>
          </BigButton>
        </ControlRight>
      </Controls>
    </BottomRow>

    <Taskbar>
      <TaskItem $w={50}><WinLogo /></TaskItem>
      <TaskItem><FolderIcon /><TaskUnderline /></TaskItem>
      <TaskItem><MailIcon /></TaskItem>
      <TaskItem><ChromeIcon /><TaskUnderline /></TaskItem>
      <TaskItem><SpotifyIcon /></TaskItem>
      <TaskItem><SnipIcon /></TaskItem>
      <TaskItem>
        <TaskTile $left={5} $right={4} $color="#3a6b3c" />
        <TaskTile $left={45} $right={0} $color="#26353b" />
        <TilesIcon />
        <TaskUnderline $color="#45d93d" />
      </TaskItem>
      <TaskItem>
        <TaskTile $left={1} $right={0} $color="#4a5759" />
        <AppIcon w={24} h={22} />
        <TaskUnderline $inset={0} />
      </TaskItem>
      <Tray>
        <TrayIcon $w={24}>
          <svg width="14" height="8" viewBox="0 0 14 8"><path d="M1 7 L7 1 L13 7" fill="none" stroke="#d6dcde" strokeWidth="1.2" /></svg>
        </TrayIcon>
        <TrayIcon $w={24}>
          <svg width="17" height="14" viewBox="0 0 17 14"><path d="M2 0 V3 M5 0 V3 M0.5 3 H6.5 V6 L3.5 8 L0.5 6 Z M3.5 8 V12 M8 2.5 H16 V11.5 H8 M10 5 L14 9 M14 5 L10 9" fill="none" stroke="#d6dcde" /></svg>
        </TrayIcon>
        <TrayIcon $w={26}>
          <svg width="14" height="14" viewBox="0 0 14 14"><path d="M1 13 C1 7 6 2 13 1 M4 13 C4 9 8 5 13 4.5 M7 13 C7 11 9 9 12 8" fill="none" stroke="#d6dcde" /><circle cx="11.5" cy="12" r="1.5" fill="#d6dcde" /></svg>
        </TrayIcon>
        <TrayIcon $w={20}>
          <svg width="15" height="12" viewBox="0 0 15 12"><path d="M0.5 4 H3 L6.5 0.8 V11.2 L3 8 H0.5 Z M9.5 4 L14 8 M14 4 L9.5 8" fill="none" stroke="#d6dcde" /></svg>
        </TrayIcon>
        <Clock>
          <div>09:44</div>
          <div>05.09.2022</div>
        </Clock>
        <TrayIcon $w={40}>
          <NoticeIcon />
        </TrayIcon>
        <DesktopEdge />
      </Tray>
    </Taskbar>
  </Page>
);

export default App;
